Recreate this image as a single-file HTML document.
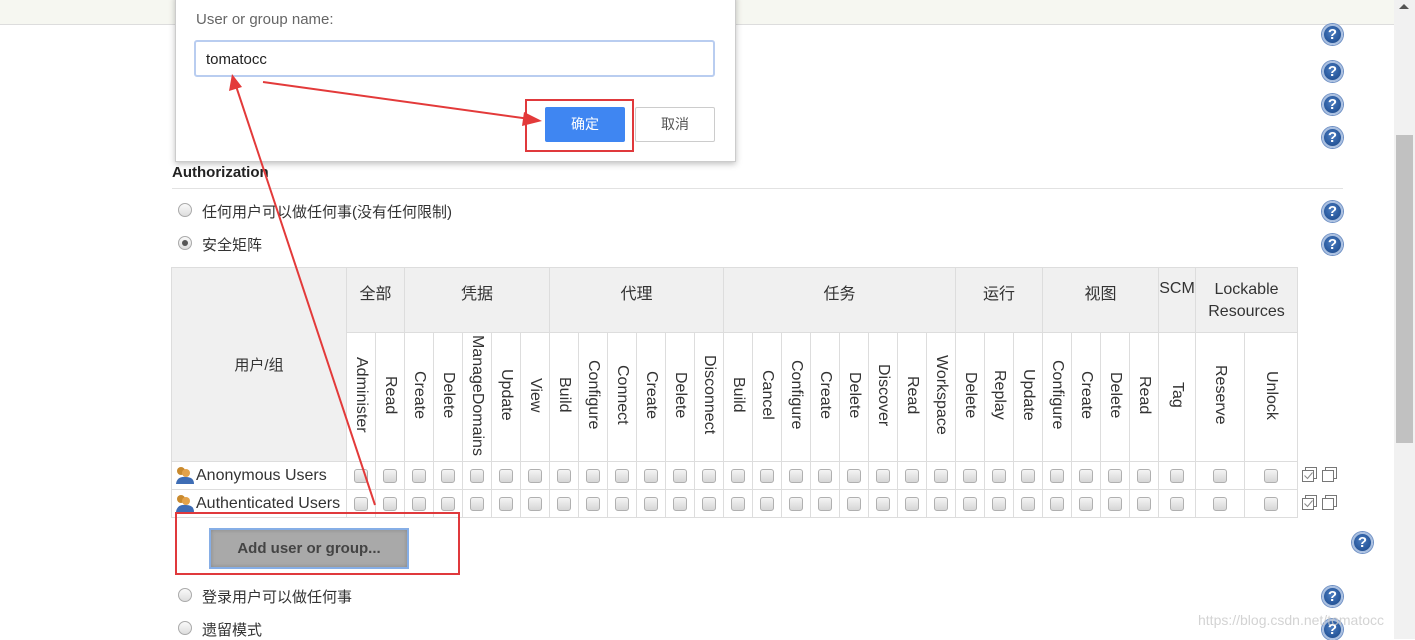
<!DOCTYPE html>
<html><head><meta charset="utf-8"><style>
*{box-sizing:border-box;margin:0;padding:0}
body{width:1415px;height:639px;overflow:hidden;background:#fff;position:relative;font-family:"Liberation Sans","Noto Sans CJK SC",sans-serif;color:#333}
.abs{position:absolute}
.help{position:absolute;width:21px;height:21px;border-radius:50%;background:radial-gradient(circle at 45% 40%,#4a7cc0 0%,#2a5a9e 60%,#1c4580 100%);border:2px solid #a9bfe0;box-shadow:0 0 0 1px #6d8fc4;color:#fff;font:bold 15px/17px "Liberation Sans",sans-serif;text-align:center}
.radio{position:absolute;width:14px;height:14px;border-radius:50%;border:1px solid #aaa;background:linear-gradient(#fafafa,#ddd)}
.radio.on::after{content:"";position:absolute;left:3px;top:3px;width:6px;height:6px;border-radius:50%;background:#555}
.lbl{position:absolute;font-size:15px;color:#333}
table{position:absolute;left:171px;top:267px;border-collapse:collapse;table-layout:fixed;font-size:15px}
td,th{border:1px solid #ddd;padding:0;font-weight:normal;text-align:center;color:#333}
th{background:#f0f0f0}
.h1 th{height:65px;vertical-align:top;padding-top:12px;font-size:16px}
.v td{height:129px;background:#fff}
.v span{writing-mode:vertical-rl;display:inline-block;font-size:16px;line-height:20px}
.r td{height:28px}
.cb{display:inline-block;width:14px;height:14px;border:1px solid #b0b0b0;border-radius:3px;background:linear-gradient(#f4f4f4,#d6d6d6);vertical-align:middle}
td.u{text-align:left;white-space:nowrap;font-size:16px;padding-left:2px}
.uic{display:inline-block;width:22px;height:18px;vertical-align:-4px;position:relative}
</style></head><body>
<div class="abs" style="left:0;top:0;width:1394px;height:25px;background:#f6f7f1;border-bottom:1px solid #ddd"></div>
<div class="abs" style="left:1394px;top:0;width:21px;height:639px;background:#f1f1f1"></div>
<div class="abs" style="left:1396px;top:135px;width:17px;height:308px;background:#c1c1c1"></div>
<div class="abs" style="left:1399px;top:4px;width:0;height:0;border-left:5px solid transparent;border-right:5px solid transparent;border-bottom:5px solid #555"></div>

<div class="help" style="left:1322px;top:24px">?</div>
<div class="help" style="left:1322px;top:61px">?</div>
<div class="help" style="left:1322px;top:94px">?</div>
<div class="help" style="left:1322px;top:127px">?</div>
<div class="help" style="left:1322px;top:201px">?</div>
<div class="help" style="left:1322px;top:234px">?</div>
<div class="help" style="left:1352px;top:532px">?</div>
<div class="help" style="left:1322px;top:586px">?</div>
<div class="help" style="left:1322px;top:619px">?</div>

<div class="abs" style="left:172px;top:164px;font-weight:bold;font-size:15px;color:#222">Authorization</div>
<div class="abs" style="left:172px;top:188px;width:1171px;height:1px;background:#e2e2e2"></div>

<div class="radio" style="left:178px;top:203px"></div><div class="lbl" style="left:202px;top:201px">任何用户可以做任何事(没有任何限制)</div>
<div class="radio on" style="left:178px;top:236px"></div><div class="lbl" style="left:202px;top:234px">安全矩阵</div>
<div class="radio" style="left:178px;top:588px"></div><div class="lbl" style="left:202px;top:586px">登录用户可以做任何事</div>
<div class="radio" style="left:178px;top:621px"></div><div class="lbl" style="left:202px;top:619px">遗留模式</div>

<table>
<colgroup><col style="width:175px">
<col span="28" style="width:29px"><col style="width:37px"><col style="width:49px"><col style="width:53px"></colgroup>
<tr class="h1"><th rowspan="2" style="vertical-align:middle;padding:0;font-size:15px">用户/组</th>
<th colspan="2">全部</th><th colspan="5">凭据</th><th colspan="6">代理</th><th colspan="8">任务</th><th colspan="3">运行</th><th colspan="4">视图</th><th>SCM</th><th colspan="2" style="padding-top:11px;line-height:22px">Lockable<br>Resources</th></tr>
<tr class="v">
<td><span>Administer</span></td><td><span>Read</span></td>
<td><span>Create</span></td><td><span>Delete</span></td><td><span>ManageDomains</span></td><td><span>Update</span></td><td><span>View</span></td>
<td><span>Build</span></td><td><span>Configure</span></td><td><span>Connect</span></td><td><span>Create</span></td><td><span>Delete</span></td><td><span>Disconnect</span></td>
<td><span>Build</span></td><td><span>Cancel</span></td><td><span>Configure</span></td><td><span>Create</span></td><td><span>Delete</span></td><td><span>Discover</span></td><td><span>Read</span></td><td><span>Workspace</span></td>
<td><span>Delete</span></td><td><span>Replay</span></td><td><span>Update</span></td>
<td><span>Configure</span></td><td><span>Create</span></td><td><span>Delete</span></td><td><span>Read</span></td>
<td><span>Tag</span></td><td><span>Reserve</span></td><td><span>Unlock</span></td></tr>
<tr class="r"><td class="u"><span class="uic"><svg width="22" height="18"><circle cx="7" cy="5" r="4" fill="#c98a2e"/><circle cx="12" cy="7" r="4" fill="#e3a24a"/><path d="M2 18 Q3 10 12 11 Q20 11 20 18Z" fill="#3e6db5"/></svg></span>Anonymous Users</td>
<td><i class="cb"></i></td><td><i class="cb"></i></td><td><i class="cb"></i></td><td><i class="cb"></i></td><td><i class="cb"></i></td><td><i class="cb"></i></td><td><i class="cb"></i></td><td><i class="cb"></i></td><td><i class="cb"></i></td><td><i class="cb"></i></td><td><i class="cb"></i></td><td><i class="cb"></i></td><td><i class="cb"></i></td><td><i class="cb"></i></td><td><i class="cb"></i></td><td><i class="cb"></i></td><td><i class="cb"></i></td><td><i class="cb"></i></td><td><i class="cb"></i></td><td><i class="cb"></i></td><td><i class="cb"></i></td><td><i class="cb"></i></td><td><i class="cb"></i></td><td><i class="cb"></i></td><td><i class="cb"></i></td><td><i class="cb"></i></td><td><i class="cb"></i></td><td><i class="cb"></i></td><td><i class="cb"></i></td><td><i class="cb"></i></td><td><i class="cb"></i></td></tr>
<tr class="r"><td class="u"><span class="uic"><svg width="22" height="18"><circle cx="7" cy="5" r="4" fill="#c98a2e"/><circle cx="12" cy="7" r="4" fill="#e3a24a"/><path d="M2 18 Q3 10 12 11 Q20 11 20 18Z" fill="#3e6db5"/></svg></span>Authenticated Users</td>
<td><i class="cb"></i></td><td><i class="cb"></i></td><td><i class="cb"></i></td><td><i class="cb"></i></td><td><i class="cb"></i></td><td><i class="cb"></i></td><td><i class="cb"></i></td><td><i class="cb"></i></td><td><i class="cb"></i></td><td><i class="cb"></i></td><td><i class="cb"></i></td><td><i class="cb"></i></td><td><i class="cb"></i></td><td><i class="cb"></i></td><td><i class="cb"></i></td><td><i class="cb"></i></td><td><i class="cb"></i></td><td><i class="cb"></i></td><td><i class="cb"></i></td><td><i class="cb"></i></td><td><i class="cb"></i></td><td><i class="cb"></i></td><td><i class="cb"></i></td><td><i class="cb"></i></td><td><i class="cb"></i></td><td><i class="cb"></i></td><td><i class="cb"></i></td><td><i class="cb"></i></td><td><i class="cb"></i></td><td><i class="cb"></i></td><td><i class="cb"></i></td></tr>
</table>

<svg class="abs" style="left:1300px;top:466px" width="40" height="50">
<g fill="none" stroke="#777" stroke-width="1"><rect x="2.5" y="4.5" width="11" height="11"/><path d="M5.5 4.5V1.5H16.5V12.5H13.5"/><path d="M4.5 9.5L7.5 12.5L12.5 6.5" stroke="#888"/>
<rect x="22.5" y="4.5" width="11" height="11"/><path d="M25.5 4.5V1.5H36.5V12.5H33.5"/>
<g transform="translate(0,28)"><rect x="2.5" y="4.5" width="11" height="11"/><path d="M5.5 4.5V1.5H16.5V12.5H13.5"/><path d="M4.5 9.5L7.5 12.5L12.5 6.5" stroke="#888"/>
<rect x="22.5" y="4.5" width="11" height="11"/><path d="M25.5 4.5V1.5H36.5V12.5H33.5"/></g></g></svg>

<div class="abs" style="left:209px;top:528px;width:200px;height:41px;background:#a9a9a9;border:2px solid #86aee6;box-shadow:inset 0 0 4px #888;font-weight:bold;font-size:15px;color:#444;text-align:center;line-height:37px">Add user or group...</div>

<!-- dialog -->
<div class="abs" style="left:175px;top:-5px;width:561px;height:167px;background:#fff;border:1px solid #ccc;box-shadow:0 2px 6px rgba(0,0,0,.25)"></div>
<div class="abs" style="left:196px;top:11px;font-size:15px;color:#666">User or group name:</div>
<div class="abs" style="left:194px;top:40px;width:521px;height:37px;border:2px solid #b9cdf0;border-radius:3px;background:#fff;font-size:15px;color:#222;padding-left:10px;line-height:35px">tomatocc</div>
<div class="abs" style="left:545px;top:107px;width:80px;height:35px;background:#3f86f2;border-radius:2px;color:#fff;font-size:14px;text-align:center;line-height:35px">确定</div>
<div class="abs" style="left:635px;top:107px;width:80px;height:35px;background:#fff;border:1px solid #ccc;border-radius:2px;color:#555;font-size:14px;text-align:center;line-height:33px">取消</div>

<div class="abs" style="left:1198px;top:612px;font-size:14px;color:rgba(200,200,200,.8)">https://blog.csdn.net/tomatocc</div>

<!-- annotations -->
<div class="abs" style="left:525px;top:99px;width:109px;height:53px;border:2px solid #e0393c"></div>
<div class="abs" style="left:175px;top:512px;width:285px;height:63px;border:2px solid #e0393c"></div>
<svg class="abs" style="left:0;top:0" width="700" height="520">
<g stroke="#e33a3a" stroke-width="2" fill="#e33a3a">
<line x1="263" y1="82" x2="530" y2="119"/>
<polygon points="542,121 524,112 522,126" stroke="none"/>
<line x1="375" y1="505" x2="236" y2="86"/>
<polygon points="232,74 229,91 242,87" stroke="none"/>
</g></svg>
</body></html>
